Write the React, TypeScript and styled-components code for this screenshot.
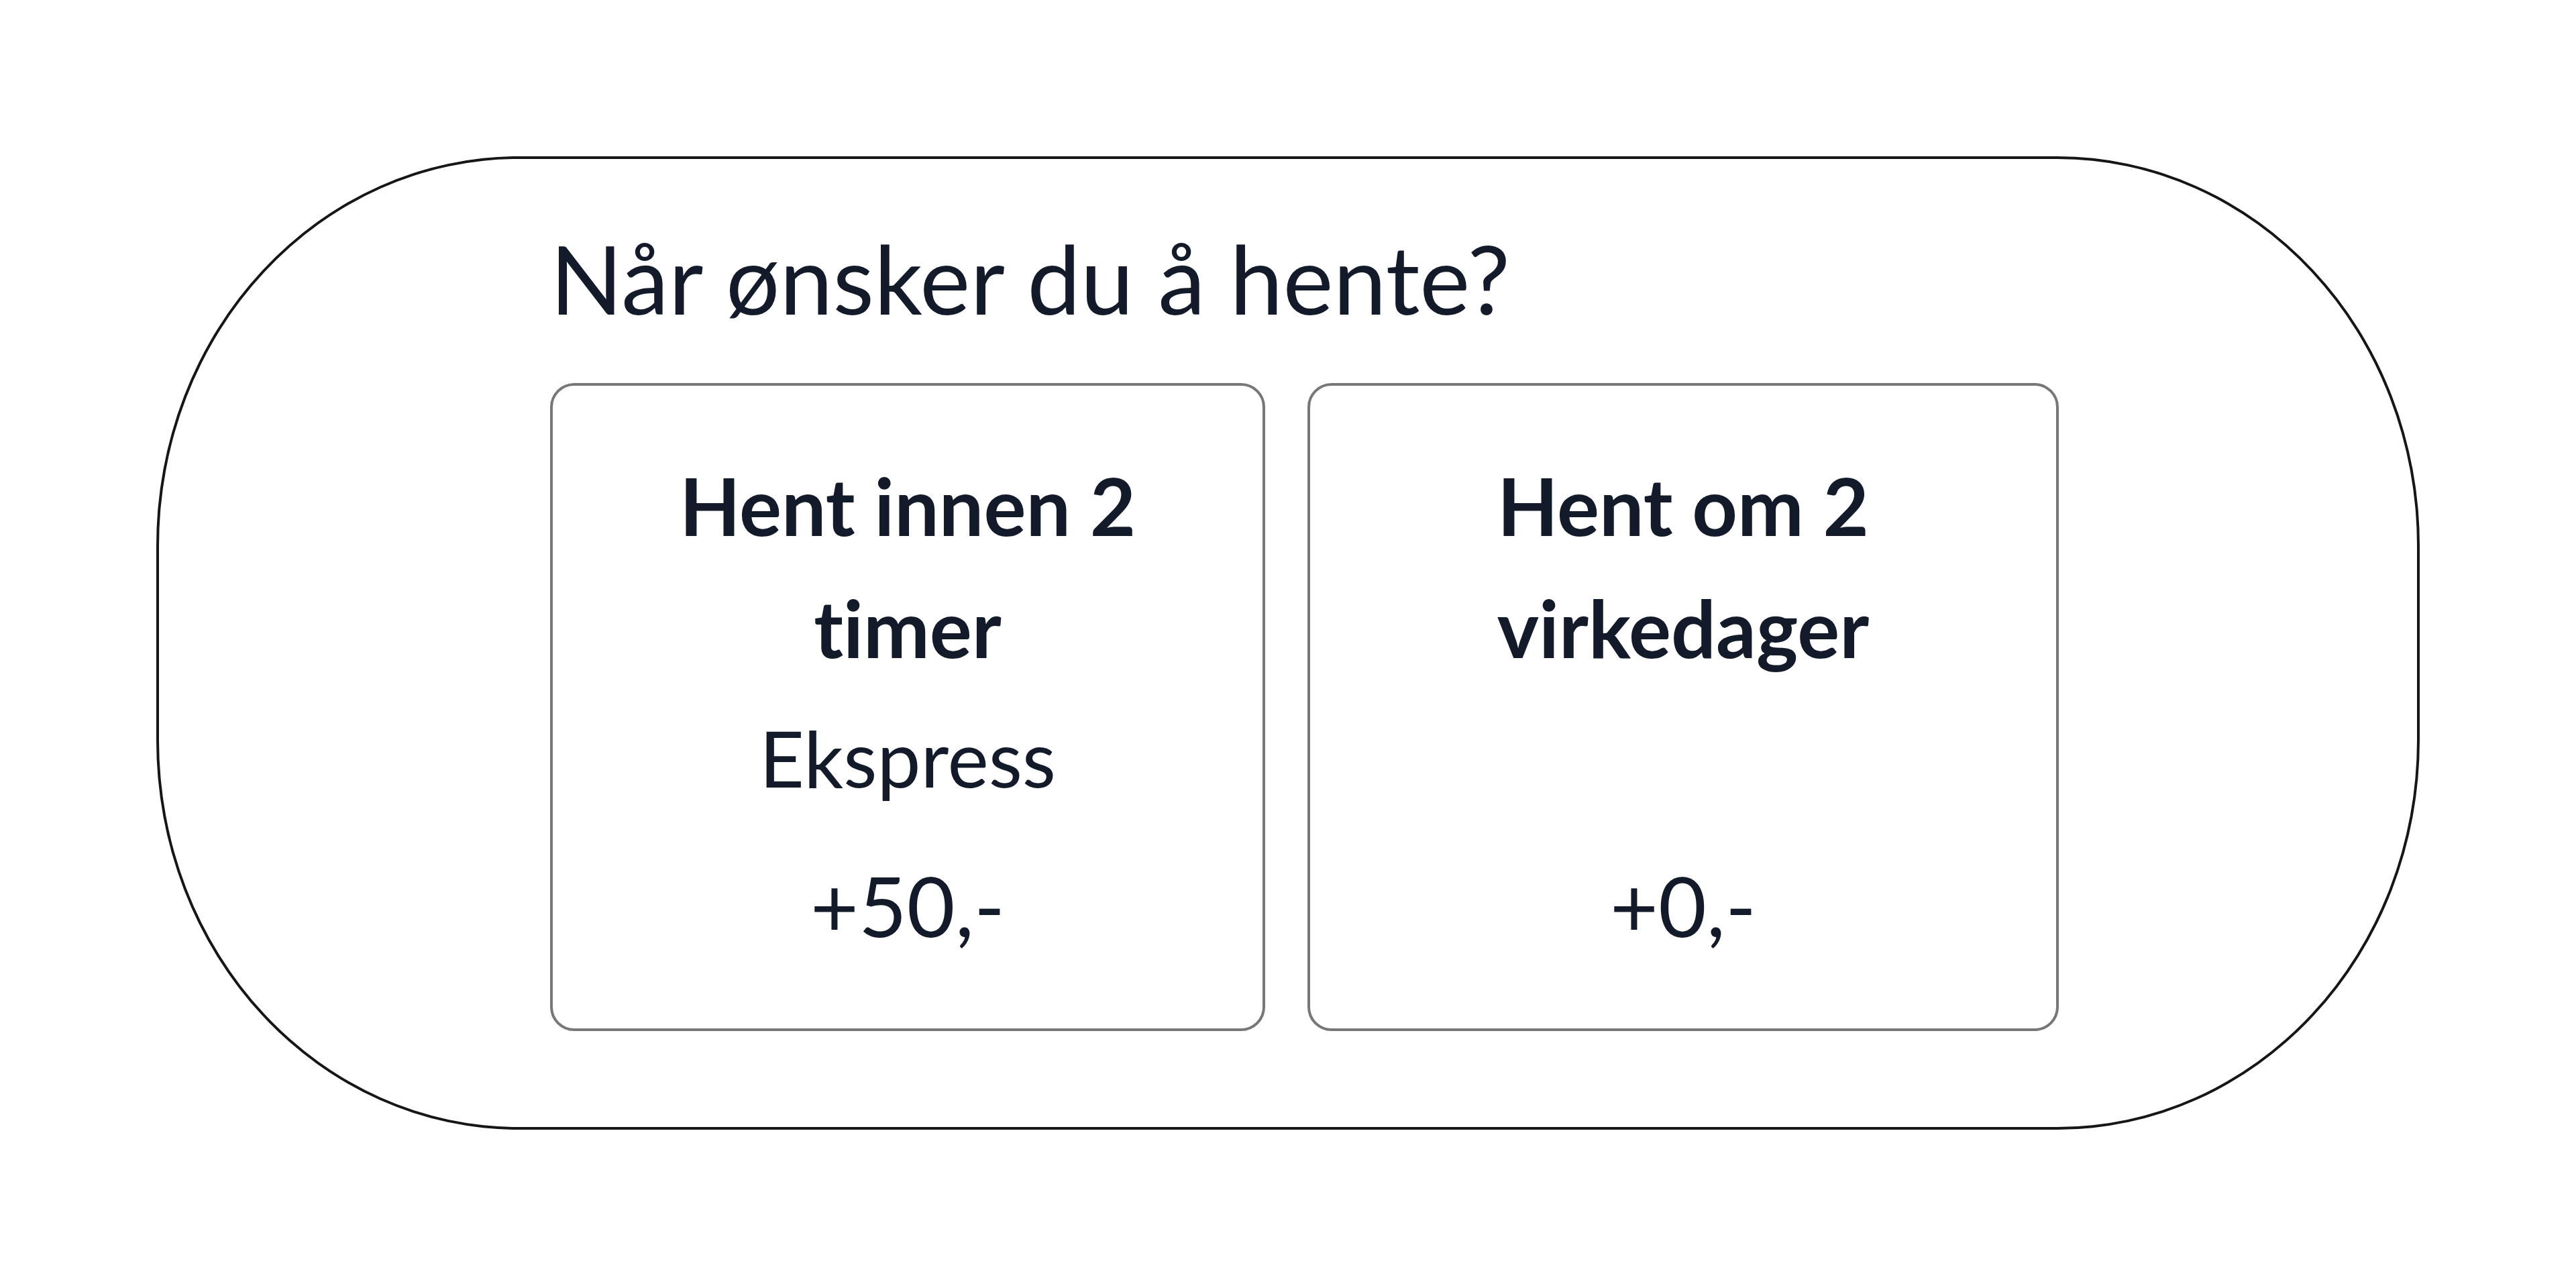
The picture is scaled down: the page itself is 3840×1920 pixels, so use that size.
import styled, { createGlobalStyle } from 'styled-components';

const options = [
  {
    id: 1,
    title: 'Hent innen 2 timer',
    note: 'Ekspress',
    price: '+50,-',
    width: 1066
  },
  {
    id: 2,
    title: 'Hent om 2 virkedager',
    note: '',
    price: '+0,-',
    width: 1120
  }
];

const GlobalStyle = createGlobalStyle`
  body {
    margin: 0;
    background: #ffffff;
    font-family: Lato, 'Liberation Sans', sans-serif;
    font-variant-ligatures: none;
    color: #131a2a;
  }
`;

export default function App() {
  return (
    <>
      <GlobalStyle />
      <Page>
        <Pill>
          <Heading>Når ønsker du å hente?</Heading>
          <Options>
            {options.map((item) => (
              <OptionCard key={item.id} $width={item.width}>
                <Title>{item.title}</Title>
                {item.note && <Note>{item.note}</Note>}
                <Price>{item.price}</Price>
              </OptionCard>
            ))}
          </Options>
        </Pill>
      </Page>
    </>
  );
}

const Page = styled.div`
  display: flex;
  padding: 233px 0 0 233px;
`;

const Pill = styled.section`
  box-sizing: border-box;
  width: 3374px;
  padding: 92px 0 143px 583px;
  border: 4px solid #161616;
  border-radius: 540px / 580px;
  display: flex;
  flex-direction: column;
  gap: 72px;
`;

const Heading = styled.h2`
  margin: 0;
  font-size: 142px;
  font-weight: 400;
  line-height: 1.2;
  color: #131a2a;
`;

const Options = styled.div`
  display: flex;
  gap: 63px;
  align-items: stretch;
`;

const OptionCard = styled.div<{ $width: number }>`
  box-sizing: border-box;
  width: ${(p) => p.$width}px;
  padding: 88px 90px 110px;
  border: 4px solid #777777;
  border-radius: 36px;
  display: flex;
  flex-direction: column;
  align-items: center;
  text-align: center;
`;

const Title = styled.div`
  font-size: 118px;
  font-weight: 700;
  line-height: 182px;
`;

const Note = styled.div`
  margin-top: 33px;
  font-size: 116px;
  font-weight: 400;
  line-height: 1.2;
`;

const Price = styled.div`
  margin-top: auto;
  padding-top: 75px;
  font-size: 124px;
  font-weight: 400;
  line-height: 1.2;
`;
